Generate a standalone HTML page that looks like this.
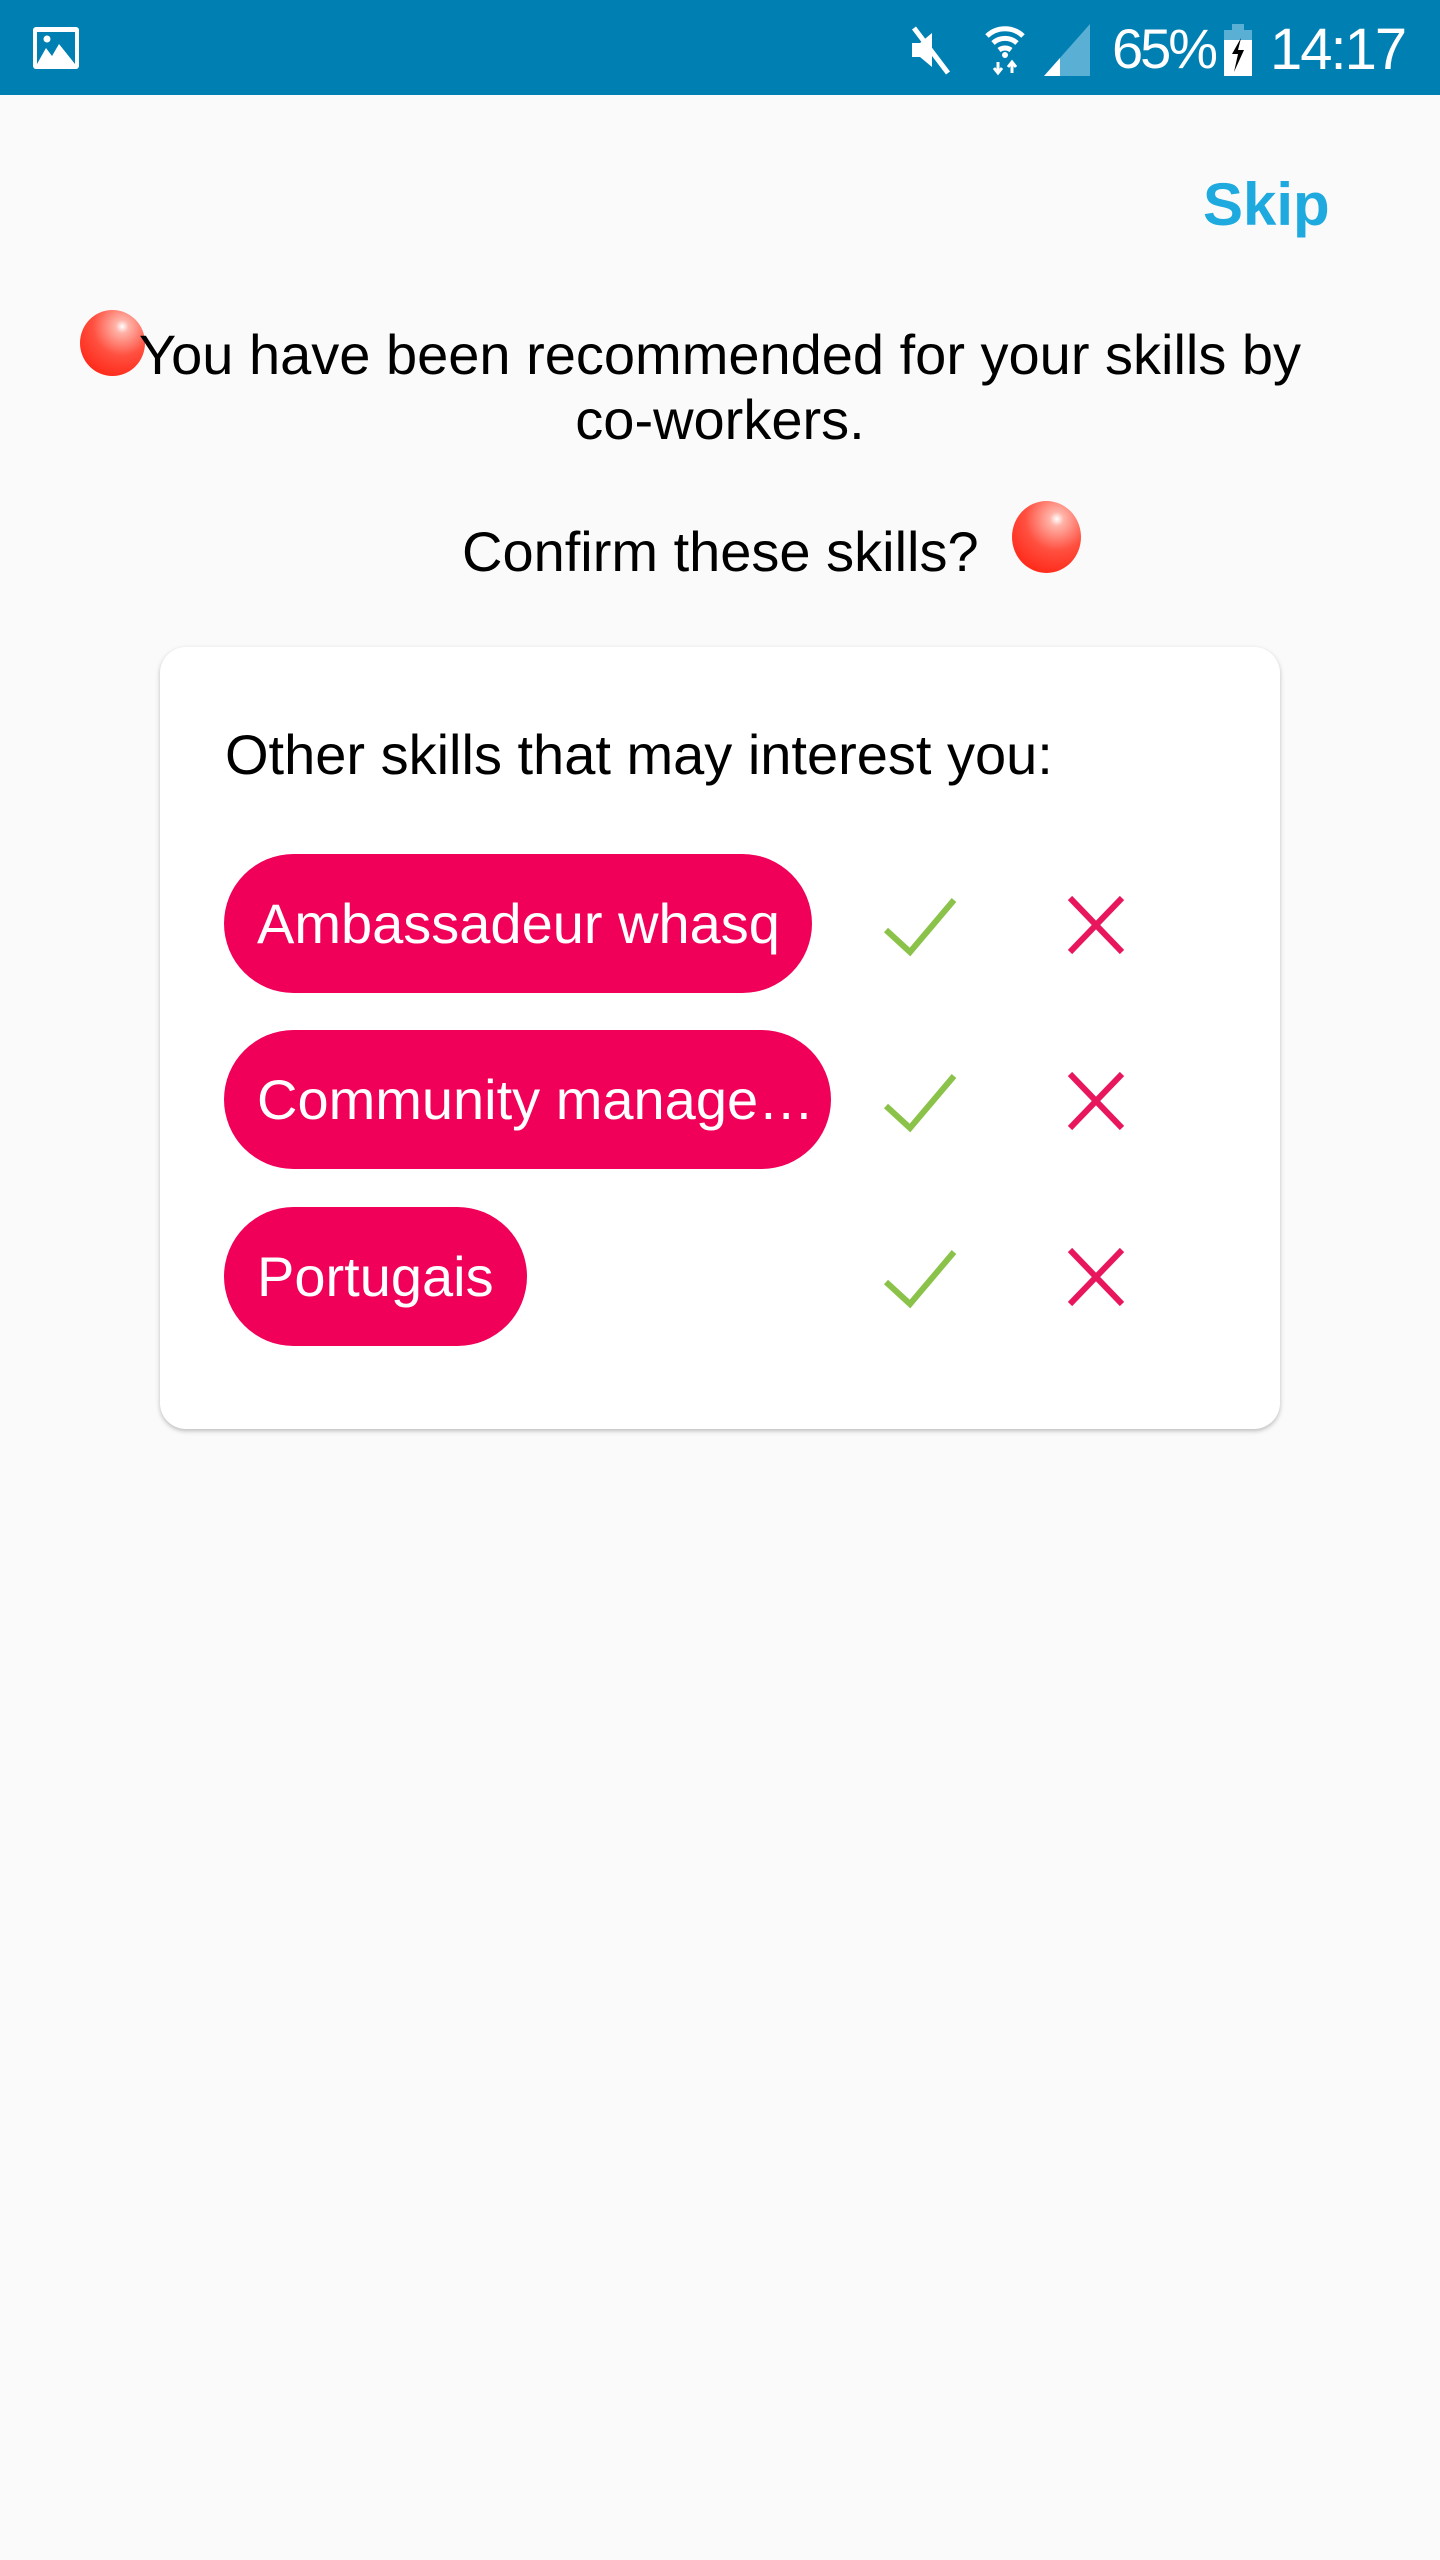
<!DOCTYPE html>
<html><head><meta charset="utf-8"><style>
*{margin:0;padding:0;box-sizing:border-box}
body{width:1440px;height:2560px;background:#fafafa;font-family:"Liberation Sans",sans-serif;position:relative;overflow:hidden}
.sb{position:absolute;left:0;top:0;width:1440px;height:95px;background:#007fb2}
.abs{position:absolute}
.ball{position:absolute;border-radius:50%;background:radial-gradient(circle at 65% 25%,#fff 0,#ffb3a8 10%,#ff5040 45%,#ff2a1a 80%)}
.line{position:absolute;left:0;width:1440px;text-align:center;font-size:56px;color:#000}
.card{position:absolute;left:160px;top:647px;width:1120px;height:782px;background:#fff;border-radius:26px;box-shadow:0 2px 5px rgba(0,0,0,.25)}
.pill{position:absolute;left:224px;height:139px;border-radius:70px;background:#f00058;color:#fff;font-size:56px;line-height:139px;padding-left:33px;white-space:nowrap}
</style></head><body>
<div class="sb">
<svg class="abs" style="left:32px;top:26px" width="48" height="44" viewBox="0 0 48 44"><rect x="1" y="1" width="46" height="42" rx="3" fill="#fff"/><rect x="5" y="6" width="38" height="32" fill="#007fb2"/><path d="M5 38 L14 22 L20 30 L27 18 L43 38Z" fill="#fff"/><circle cx="15" cy="13" r="3.5" fill="#fff"/></svg>
<svg class="abs" style="left:908px;top:25px" width="48" height="50" viewBox="0 0 48 50"><path d="M4 18h8l12-10v34l-12-10H4z" fill="#fff"/><path d="M6 3 L40 48" stroke="#fff" stroke-width="5"/></svg>
<svg class="abs" style="left:984px;top:24px" width="42" height="52" viewBox="0 0 42 52"><path d="M3 12 A26 26 0 0 1 39 12" stroke="#fff" stroke-width="5" fill="none"/><path d="M9 19 A18 18 0 0 1 33 19" stroke="#fff" stroke-width="5" fill="none"/><path d="M15 26 A10 10 0 0 1 27 26" stroke="#fff" stroke-width="5" fill="none"/><circle cx="21" cy="31" r="3" fill="#fff"/><path d="M14 38v10M10 44l4 5 4-5M28 49v-10M24 43l4-5 4 5" stroke="#fff" stroke-width="3" fill="none"/></svg>
<svg class="abs" style="left:1042px;top:24px" width="50" height="52" viewBox="0 0 50 52"><path d="M2 52 L48 0 V52Z" fill="#5aafd4"/><path d="M2 52 L18 34 V52Z" fill="#fff"/></svg>
<div class="abs" style="left:1112px;top:16px;font-size:56px;color:#fff;letter-spacing:-3px">65%</div>
<svg class="abs" style="left:1222px;top:24px" width="32" height="52" viewBox="0 0 32 52"><rect x="10" y="0" width="12" height="6" fill="#5aafd4"/><rect x="2" y="6" width="28" height="46" fill="#fff"/><rect x="2" y="6" width="28" height="10" fill="#5aafd4"/><path d="M19 14 L10 30 H16 L12 48 L22 26 H16Z" fill="#000"/></svg>
<div class="abs" style="left:1270px;top:16px;font-size:58px;color:#fff;letter-spacing:-2px">14:17</div>
</div>
<div class="abs" style="left:1203px;top:170px;font-size:60px;color:#1eaadf;font-weight:bold">Skip</div>
<div class="ball" style="left:80px;top:310px;width:65px;height:66px"></div>
<div class="line" style="top:322px">You have been recommended for your skills by</div>
<div class="line" style="top:387px">co-workers.</div>
<div class="abs" style="left:462px;top:519px;font-size:56px">Confirm these skills?</div>
<div class="ball" style="left:1012px;top:501px;width:69px;height:72px"></div>
<div class="card"></div>
<div class="abs" style="left:225px;top:722px;font-size:56px">Other skills that may interest you:</div>
<div class="pill" style="top:854px;width:588px">Ambassadeur whasq</div>
<div class="pill" style="top:1030px;width:607px">Community manage…</div>
<div class="pill" style="top:1207px;width:303px">Portugais</div>
<svg class="abs" style="left:880px;top:890px" width="82" height="470" viewBox="0 0 82 470">
<g stroke="#8bc34a" stroke-width="6" fill="none"><path d="M6 40 L30 62 L74 10"/><path d="M6 216 L30 238 L74 186"/><path d="M6 392 L30 414 L74 362"/></g></svg>
<svg class="abs" style="left:1064px;top:890px" width="64" height="470" viewBox="0 0 64 470">
<g stroke="#e8175d" stroke-width="6" fill="none"><path d="M6 8L58 62M58 8L6 62"/><path d="M6 184L58 238M58 184L6 238"/><path d="M6 360L58 414M58 360L6 414"/></g></svg>
</body></html>
